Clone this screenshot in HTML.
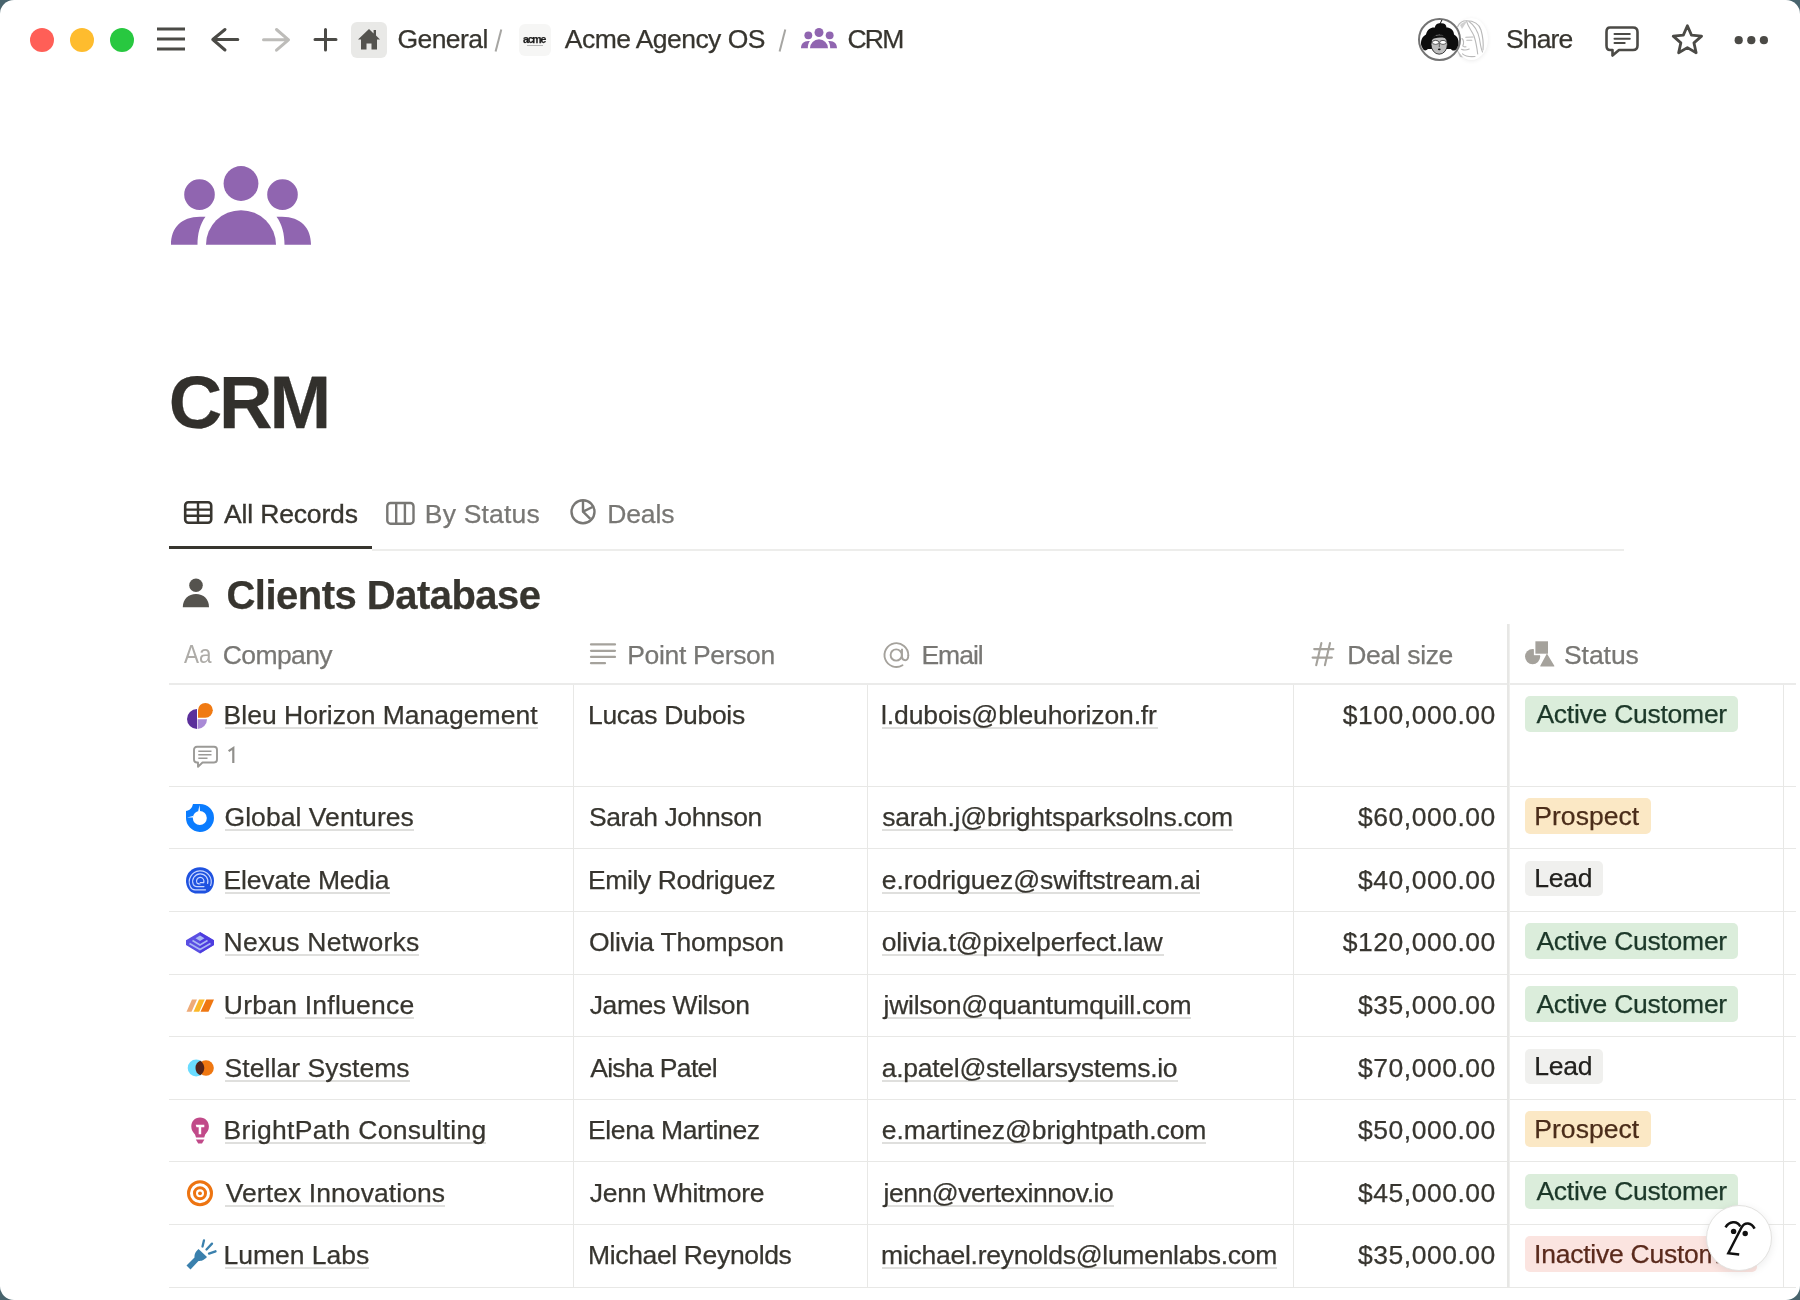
<!DOCTYPE html>
<html><head><meta charset="utf-8"><title>CRM</title>
<style>
html,body{margin:0;padding:0;width:1800px;height:1300px;overflow:hidden;background:#48646d;}
#win{position:absolute;left:0;top:0;width:1800px;height:1300px;background:#fff;border-radius:14px;overflow:hidden;will-change:transform;}
.t{position:absolute;white-space:nowrap;font-family:"Liberation Sans",sans-serif;-webkit-text-stroke:0.25px currentColor;}
svg{overflow:visible}
</style></head><body><div id="win">
<div style="position:absolute;left:30px;top:28px;width:24px;height:24px;border-radius:50%;background:#ff5f57"></div>
<div style="position:absolute;left:70px;top:28px;width:24px;height:24px;border-radius:50%;background:#febc2e"></div>
<div style="position:absolute;left:110px;top:28px;width:24px;height:24px;border-radius:50%;background:#28c840"></div>
<svg style="position:absolute;left:150px;top:20px" width="40" height="40" viewBox="0 0 40 40"><rect x="7" y="7.5" width="28" height="3" fill="#4b4a46"/><rect x="7" y="17.5" width="28" height="3" fill="#4b4a46"/><rect x="7" y="27.5" width="28" height="3" fill="#4b4a46"/></svg>
<svg style="position:absolute;left:205px;top:20px" width="40" height="40" viewBox="0 0 40 40"><path d="M20,9.5 L7.8,19.5 L20,30 M7.8,19.5 H32.8" fill="none" stroke="#4b4a46" stroke-width="3" stroke-linecap="round" stroke-linejoin="round"/></svg>
<svg style="position:absolute;left:255px;top:20px" width="40" height="40" viewBox="0 0 40 40"><path d="M21.5,9.5 L33.5,19.8 L21.5,30.2 M33.5,19.8 H8.5" fill="none" stroke="#bdbcb9" stroke-width="3" stroke-linecap="round" stroke-linejoin="round"/></svg>
<svg style="position:absolute;left:305px;top:20px" width="40" height="40" viewBox="0 0 40 40"><path d="M20.5,9.5 V30 M10,19.5 H31" fill="none" stroke="#4b4a46" stroke-width="3" stroke-linecap="round"/></svg>
<div style="position:absolute;left:351px;top:22px;width:36px;height:36px;border-radius:6px;background:#e9e9e7"></div>
<svg style="position:absolute;left:351px;top:22px" width="36" height="36" viewBox="0 0 36 36"><path d="M18,7 L7,17.5 L10,17.5 L10,27.5 L15.5,27.5 L15.5,21.5 L20.5,21.5 L20.5,27.5 L26,27.5 L26,17.5 L29,17.5 L25,13.6 L25,8 L22.6,8 L22.6,11.4 Z" fill="#54534f"/></svg>
<div class="t " style="left:397.48px;top:24.00px;font-size:26.5px;line-height:30px;letter-spacing:-0.577px;color:#37352f;">General</div>
<svg style="position:absolute;left:490px;top:25px" width="16" height="30" viewBox="0 0 16 30"><path d="M11.3,4.6 L5.6,26.6" stroke="#a6a5a2" stroke-width="2"/></svg>
<div style="position:absolute;left:519px;top:24px;width:32px;height:32px;border-radius:6px;background:#f6f6f5"></div>
<div class="t " style="left:522.98px;top:33.10px;font-size:10.5px;line-height:12px;letter-spacing:-1.166px;color:#1e1e1e;font-weight:700;">acme</div>
<div style="position:absolute;left:527px;top:45px;width:16px;height:1px;background:#b5b5b5"></div>
<div class="t " style="left:564.83px;top:24.00px;font-size:26.5px;line-height:30px;letter-spacing:-0.549px;color:#37352f;">Acme Agency OS</div>
<svg style="position:absolute;left:774px;top:25px" width="16" height="30" viewBox="0 0 16 30"><path d="M11.3,4.6 L5.6,26.6" stroke="#a6a5a2" stroke-width="2"/></svg>
<svg style="position:absolute;left:801px;top:28px" width="37" height="22" viewBox="0 0 37 22"><g transform="scale(0.2571428571428571)" fill="#9065b0"><circle cx="70" cy="17.5" r="17.4"/><circle cx="28.5" cy="28.6" r="15.3"/><circle cx="111.5" cy="28.6" r="15.3"/><path d="M35,78.7 A35,34.5 0 0 1 105,78.7 Z"/><path d="M0,78.7 C0,62 10,50.7 29,50.7 L34.5,50.7 C29,58 26.5,68 26.5,78.7 Z"/><path d="M140,78.7 C140,62 130,50.7 111,50.7 L105.5,50.7 C111,58 113.5,68 113.5,78.7 Z"/></g></svg>
<div class="t " style="left:847.38px;top:24.00px;font-size:26.5px;line-height:30px;letter-spacing:-1.671px;color:#37352f;">CRM</div>
<div style="position:absolute;left:1455px;top:18px;width:33px;height:42px;border-radius:50%;background:#fff;box-shadow:0 1px 4px rgba(0,0,0,0.08)"></div>
<svg style="position:absolute;left:1450px;top:15px" width="45" height="50" viewBox="0 0 45 50"><g fill="none" stroke="#b9b9b9" stroke-width="1.1" stroke-linecap="round"><path d="M7.7,11.5 C10,7 14,5.8 16.5,5.8 C24,5.8 29,9 31,15 C33,22 33.5,30 33,35"/><path d="M16.5,6.2 C18,12 22,16 24,21 C26,27 27,33 27.7,39"/><path d="M19,6.5 C24,10 28,16 29.5,24 C30.5,30 31,34 32.5,37"/><path d="M12,23.5 C13.5,25 14,28 12.8,31 C13.5,32 15,32 16,31.8"/><path d="M15.8,22.3 L23,22 M16.8,25.3 L21.8,25.3"/><path d="M11.5,34.2 Q15,36 19.2,34"/><path d="M12.5,38.8 C15,41 20,42 25,41.5"/></g><path d="M6.5,34 L13,42.5 L10,42 Z" fill="#c4c4c4"/><path d="M10,10 C13,7.5 15,6.5 17,6.3 L12,14 Z" fill="#d0d0d0"/></svg>
<div style="position:absolute;left:1418px;top:18px;width:39px;height:39px;border-radius:50%;background:#fff;border:2px solid #747474"></div>
<svg style="position:absolute;left:1418px;top:18px" width="43" height="43" viewBox="0 0 43 43"><g><path d="M22,6 L24,1.8" stroke="#111" stroke-width="1"/><path d="M4.5,30 C1.5,26 3,19 8,16.5 C9,11.5 13,9 17,9.5 C17,6.5 20,5 23,5.3 C26,5 28.5,6.5 28.5,9.5 C32,9.5 36,12 36,16.5 C41,19 42,26 38.5,31 C37,33 34,33 33,31 L10,31 C8,33 5.5,33 4.5,30 Z" fill="#0d0d0d"/><ellipse cx="21.2" cy="26.2" rx="8.2" ry="10" fill="#bdbdbd" stroke="#111" stroke-width="0.8"/><path d="M12.5,22.5 C14,16 28.5,15.5 30.2,21.5 C26,18.8 17,18.8 12.5,22.5 Z" fill="#111"/><ellipse cx="17.6" cy="24.4" rx="3.3" ry="2" fill="#fff" stroke="#222" stroke-width="0.7"/><ellipse cx="25" cy="24.4" rx="3.3" ry="2" fill="#fff" stroke="#222" stroke-width="0.7"/><path d="M21.3,25 V29.2" stroke="#333" stroke-width="0.7"/><ellipse cx="21.3" cy="31.3" rx="1.4" ry="0.9" fill="#111"/></g></svg>
<div class="t " style="left:1506.01px;top:23.80px;font-size:26.5px;line-height:30px;letter-spacing:-0.843px;color:#37352f;">Share</div>
<svg style="position:absolute;left:1600px;top:20px" width="45" height="42" viewBox="0 0 45 42"><path d="M10,7.5 H33 Q37.5,7.5 37.5,12 V25.5 Q37.5,30 33,30 H19 L12.5,35.5 V30 H10 Q6.5,30 6.5,25.5 V12 Q6.5,7.5 10,7.5 Z" fill="none" stroke="#4b4a46" stroke-width="2.6" stroke-linejoin="round"/><path d="M14.5,14 H29.8 M14.5,18.7 H29.8 M14.5,23 H24.7" stroke="#4b4a46" stroke-width="2" stroke-linecap="round"/></svg>
<svg style="position:absolute;left:1665px;top:18px" width="45" height="42" viewBox="0 0 45 42"><path d="M22.40,7.80 L26.46,17.12 L36.57,18.10 L28.96,24.83 L31.16,34.75 L22.40,29.60 L13.64,34.75 L15.84,24.83 L8.23,18.10 L18.34,17.12 Z" fill="none" stroke="#4b4a46" stroke-width="2.8" stroke-linejoin="round"/></svg>
<svg style="position:absolute;left:1730px;top:30px" width="44" height="20" viewBox="0 0 44 20"><circle cx="8.700000000000045" cy="10.2" r="4.1" fill="#4b4a46"/><circle cx="21.299999999999955" cy="10.2" r="4.1" fill="#4b4a46"/><circle cx="33.90000000000009" cy="10.2" r="4.1" fill="#4b4a46"/></svg>
<svg style="position:absolute;left:171px;top:166px" width="140" height="79" viewBox="0 0 140 79"><g transform="scale(1)" fill="#9065b0"><circle cx="70" cy="17.5" r="17.4"/><circle cx="28.5" cy="28.6" r="15.3"/><circle cx="111.5" cy="28.6" r="15.3"/><path d="M35,78.7 A35,34.5 0 0 1 105,78.7 Z"/><path d="M0,78.7 C0,62 10,50.7 29,50.7 L34.5,50.7 C29,58 26.5,68 26.5,78.7 Z"/><path d="M140,78.7 C140,62 130,50.7 111,50.7 L105.5,50.7 C111,58 113.5,68 113.5,78.7 Z"/></g></svg>
<div class="t " style="left:168.74px;top:361.00px;font-size:74px;line-height:83px;letter-spacing:-3.082px;color:#32302c;font-weight:700;">CRM</div>
<svg style="position:absolute;left:180px;top:495px" width="36" height="34" viewBox="0 0 36 34"><rect x="5.2" y="7.2" width="26" height="20.5" rx="3.2" fill="none" stroke="#37352f" stroke-width="2.6"/><path d="M5.2,14.6 H31.2 M5.2,20.7 H31.2 M18,7.2 V27.7" stroke="#37352f" stroke-width="2.4"/></svg>
<div class="t " style="left:223.93px;top:499.00px;font-size:26.5px;line-height:30px;letter-spacing:-0.149px;color:#37352f;-webkit-text-stroke:0.35px #37352f">All Records</div>
<svg style="position:absolute;left:380px;top:495px" width="40" height="34" viewBox="0 0 40 34"><rect x="7.3" y="8" width="26.2" height="20.7" rx="3.2" fill="none" stroke="#787774" stroke-width="2.4"/><path d="M16.2,8 V28.7 M24.9,8 V28.7" stroke="#787774" stroke-width="2.4"/></svg>
<div class="t " style="left:424.81px;top:499.00px;font-size:26.5px;line-height:30px;letter-spacing:0.199px;color:#787774;-webkit-text-stroke:0.25px #787774">By Status</div>
<svg style="position:absolute;left:565px;top:493px" width="35" height="35" viewBox="0 0 35 35"><circle cx="18" cy="18.7" r="11.5" fill="none" stroke="#787774" stroke-width="2.4"/><path d="M18,7 V18.7 L27.5,14 M18,18.7 L25.3,25.8" fill="none" stroke="#787774" stroke-width="2.4" stroke-linejoin="round"/></svg>
<div class="t " style="left:607.21px;top:499.00px;font-size:26.5px;line-height:30px;letter-spacing:-0.115px;color:#787774;-webkit-text-stroke:0.25px #787774">Deals</div>
<div style="position:absolute;left:372px;top:549px;width:1252px;height:2px;background:#ededeb"></div>
<div style="position:absolute;left:169px;top:546px;width:203px;height:3px;background:#37352f"></div>
<svg style="position:absolute;left:180px;top:575px" width="32" height="36" viewBox="0 0 32 36"><circle cx="16" cy="10.3" r="6.8" fill="#55534e"/><path d="M2.8,32.2 C2.8,24 8.5,19 16,19 C23.5,19 29,24 29,32.2 Z" fill="#55534e"/></svg>
<div class="t " style="left:226.50px;top:572.50px;font-size:40px;line-height:44px;letter-spacing:-0.520px;color:#37352f;font-weight:700;">Clients Database</div>
<div class="t " style="left:183.94px;top:639.90px;font-size:25px;line-height:28px;letter-spacing:0.000px;color:#aeaca8;-webkit-text-stroke:0;transform:scaleX(0.9);transform-origin:0 0">Aa</div>
<div class="t " style="left:222.78px;top:639.60px;font-size:26.5px;line-height:30px;letter-spacing:-0.605px;color:#787774;">Company</div>
<svg style="position:absolute;left:585px;top:638px" width="36" height="32" viewBox="0 0 36 32"><path d="M6,6.399999999999977 H30" stroke="#a5a29c" stroke-width="2.2" stroke-linecap="round"/><path d="M6,12.799999999999955 H30" stroke="#a5a29c" stroke-width="2.2" stroke-linecap="round"/><path d="M6,18.899999999999977 H30" stroke="#a5a29c" stroke-width="2.2" stroke-linecap="round"/><path d="M6,25.200000000000045 H20" stroke="#a5a29c" stroke-width="2.2" stroke-linecap="round"/></svg>
<div class="t " style="left:627.31px;top:639.60px;font-size:26.5px;line-height:30px;letter-spacing:-0.352px;color:#787774;">Point Person</div>
<svg style="position:absolute;left:880px;top:638px" width="34" height="34" viewBox="0 0 34 34"><path d="M28.3,17 A11.9,11.9 0 1 0 22.5,27.3" fill="none" stroke="#a5a29c" stroke-width="1.9" stroke-linecap="round"/><circle cx="16.2" cy="17" r="5.6" fill="none" stroke="#a5a29c" stroke-width="1.9"/><path d="M22,10.8 V18.8 Q22,22.2 25.2,22.2 Q28.3,22.2 28.3,17" fill="none" stroke="#a5a29c" stroke-width="1.9"/></svg>
<div class="t " style="left:921.41px;top:639.60px;font-size:26.5px;line-height:30px;letter-spacing:-0.994px;color:#787774;">Email</div>
<svg style="position:absolute;left:1308px;top:638px" width="30" height="32" viewBox="0 0 30 32"><path d="M13.4,5 L8.2,27.3 M22,5 L16.9,27.3 M6.2,11.1 H25.4 M4.6,19.6 H23.9" stroke="#a5a29c" stroke-width="2.1" stroke-linecap="round"/></svg>
<div class="t " style="left:1347.31px;top:639.60px;font-size:26.5px;line-height:30px;letter-spacing:-0.371px;color:#787774;">Deal size</div>
<svg style="position:absolute;left:1520px;top:636px" width="40" height="34" viewBox="0 0 40 34"><circle cx="12.6" cy="20.6" r="7.6" fill="#a5a29c"/><rect x="13.9" y="3.8" width="15.6" height="15.4" fill="#fff"/><path d="M26.9,17.3 L19.9,30.2 L34.7,30.2 Z" fill="#fff" stroke="#fff" stroke-width="3.2" stroke-linejoin="round"/><rect x="15.4" y="5.3" width="12.6" height="12.4" fill="#a5a29c"/><path d="M26.9,17.6 L20.3,29.8 Q19.9,30.4 20.6,30.4 L34,30.4 Q34.7,30.4 34.3,29.8 Z" fill="#a5a29c"/></svg>
<div class="t " style="left:1564.01px;top:639.60px;font-size:26.5px;line-height:30px;letter-spacing:-0.061px;color:#787774;">Status</div>
<div style="position:absolute;left:169px;top:683px;width:1627px;height:2px;background:#ebebea"></div>
<div style="position:absolute;left:169px;top:786px;width:1627px;height:1px;background:#e8e8e6"></div>
<div style="position:absolute;left:169px;top:848px;width:1627px;height:1px;background:#e8e8e6"></div>
<div style="position:absolute;left:169px;top:911px;width:1627px;height:1px;background:#e8e8e6"></div>
<div style="position:absolute;left:169px;top:974px;width:1627px;height:1px;background:#e8e8e6"></div>
<div style="position:absolute;left:169px;top:1036px;width:1627px;height:1px;background:#e8e8e6"></div>
<div style="position:absolute;left:169px;top:1099px;width:1627px;height:1px;background:#e8e8e6"></div>
<div style="position:absolute;left:169px;top:1161px;width:1627px;height:1px;background:#e8e8e6"></div>
<div style="position:absolute;left:169px;top:1224px;width:1627px;height:1px;background:#e8e8e6"></div>
<div style="position:absolute;left:169px;top:1287px;width:1627px;height:1px;background:#e8e8e6"></div>
<div style="position:absolute;left:573px;top:685px;width:1px;height:602px;background:#e8e8e6"></div>
<div style="position:absolute;left:867px;top:685px;width:1px;height:602px;background:#e8e8e6"></div>
<div style="position:absolute;left:1293px;top:685px;width:1px;height:602px;background:#e8e8e6"></div>
<div style="position:absolute;left:1783px;top:685px;width:1px;height:602px;background:#e8e8e6"></div>
<div style="position:absolute;left:1507px;top:624px;width:2px;height:663px;background:#e7e7e5"></div>
<div style="position:absolute;left:1509px;top:624px;width:1px;height:663px;background:#efefed"></div>
<div style="position:absolute;left:225px;top:727px;width:313.29999999999995px;height:2px;background:#dfdfdd"></div>
<div class="t " style="left:223.61px;top:700.00px;font-size:26.5px;line-height:30px;letter-spacing:0.006px;color:#37352f;">Bleu Horizon Management</div>
<div class="t " style="left:588.01px;top:700.00px;font-size:26.5px;line-height:30px;letter-spacing:-0.307px;color:#37352f;">Lucas Dubois</div>
<div style="position:absolute;left:882px;top:727px;width:276.0px;height:2px;background:#dfdfdd"></div>
<div class="t " style="left:881.11px;top:700.00px;font-size:26.5px;line-height:30px;letter-spacing:-0.136px;color:#37352f;">l.dubois@bleuhorizon.fr</div>
<div class="t " style="left:1342.81px;top:700.00px;font-size:26.5px;line-height:30px;letter-spacing:0.514px;color:#37352f;">$100,000.00</div>
<div style="position:absolute;left:1525px;top:696px;width:212.5px;height:35.5px;border-radius:5px;background:#dbeddb"></div>
<div class="t " style="left:1536.43px;top:698.80px;font-size:26.5px;line-height:30px;letter-spacing:-0.258px;color:#1c3829;">Active Customer</div>
<div style="position:absolute;left:225px;top:829px;width:188.89999999999998px;height:2px;background:#dfdfdd"></div>
<div class="t " style="left:224.48px;top:802.00px;font-size:26.5px;line-height:30px;letter-spacing:0.057px;color:#37352f;">Global Ventures</div>
<div class="t " style="left:589.01px;top:802.00px;font-size:26.5px;line-height:30px;letter-spacing:-0.422px;color:#37352f;">Sarah Johnson</div>
<div style="position:absolute;left:882px;top:829px;width:351.0px;height:2px;background:#dfdfdd"></div>
<div class="t " style="left:882.17px;top:802.00px;font-size:26.5px;line-height:30px;letter-spacing:-0.214px;color:#37352f;">sarah.j@brightsparksolns.com</div>
<div class="t " style="left:1358.03px;top:802.00px;font-size:26.5px;line-height:30px;letter-spacing:0.514px;color:#37352f;">$60,000.00</div>
<div style="position:absolute;left:1525px;top:798px;width:125.8px;height:35.5px;border-radius:5px;background:#fbe8c5"></div>
<div class="t " style="left:1534.31px;top:800.80px;font-size:26.5px;line-height:30px;letter-spacing:0.035px;color:#4b2d1a;">Prospect</div>
<div style="position:absolute;left:225px;top:891.5px;width:165.39999999999998px;height:2px;background:#dfdfdd"></div>
<div class="t " style="left:223.61px;top:864.50px;font-size:26.5px;line-height:30px;letter-spacing:-0.180px;color:#37352f;">Elevate Media</div>
<div class="t " style="left:588.01px;top:864.50px;font-size:26.5px;line-height:30px;letter-spacing:-0.379px;color:#37352f;">Emily Rodriguez</div>
<div style="position:absolute;left:882px;top:891.5px;width:318.29999999999995px;height:2px;background:#dfdfdd"></div>
<div class="t " style="left:881.77px;top:864.50px;font-size:26.5px;line-height:30px;letter-spacing:-0.105px;color:#37352f;">e.rodriguez@swiftstream.ai</div>
<div class="t " style="left:1358.03px;top:864.50px;font-size:26.5px;line-height:30px;letter-spacing:0.514px;color:#37352f;">$40,000.00</div>
<div style="position:absolute;left:1525px;top:860.5px;width:77.6px;height:35.5px;border-radius:5px;background:#f0f0ee"></div>
<div class="t " style="left:1534.31px;top:863.30px;font-size:26.5px;line-height:30px;letter-spacing:-0.285px;color:#22211e;">Lead</div>
<div style="position:absolute;left:225px;top:954px;width:194.3px;height:2px;background:#dfdfdd"></div>
<div class="t " style="left:223.61px;top:927.00px;font-size:26.5px;line-height:30px;letter-spacing:0.207px;color:#37352f;">Nexus Networks</div>
<div class="t " style="left:588.94px;top:927.00px;font-size:26.5px;line-height:30px;letter-spacing:-0.231px;color:#37352f;">Olivia Thompson</div>
<div style="position:absolute;left:882px;top:954px;width:282.29999999999995px;height:2px;background:#dfdfdd"></div>
<div class="t " style="left:881.77px;top:927.00px;font-size:26.5px;line-height:30px;letter-spacing:-0.155px;color:#37352f;">olivia.t@pixelperfect.law</div>
<div class="t " style="left:1342.81px;top:927.00px;font-size:26.5px;line-height:30px;letter-spacing:0.514px;color:#37352f;">$120,000.00</div>
<div style="position:absolute;left:1525px;top:923px;width:212.5px;height:35.5px;border-radius:5px;background:#dbeddb"></div>
<div class="t " style="left:1536.43px;top:925.80px;font-size:26.5px;line-height:30px;letter-spacing:-0.258px;color:#1c3829;">Active Customer</div>
<div style="position:absolute;left:225px;top:1017px;width:189.10000000000002px;height:2px;background:#dfdfdd"></div>
<div class="t " style="left:223.75px;top:990.00px;font-size:26.5px;line-height:30px;letter-spacing:0.242px;color:#37352f;">Urban Influence</div>
<div class="t " style="left:589.80px;top:990.00px;font-size:26.5px;line-height:30px;letter-spacing:-0.440px;color:#37352f;">James Wilson</div>
<div style="position:absolute;left:882px;top:1017px;width:309.4000000000001px;height:2px;background:#dfdfdd"></div>
<div class="t " style="left:883.56px;top:990.00px;font-size:26.5px;line-height:30px;letter-spacing:-0.262px;color:#37352f;">jwilson@quantumquill.com</div>
<div class="t " style="left:1358.03px;top:990.00px;font-size:26.5px;line-height:30px;letter-spacing:0.514px;color:#37352f;">$35,000.00</div>
<div style="position:absolute;left:1525px;top:986px;width:212.5px;height:35.5px;border-radius:5px;background:#dbeddb"></div>
<div class="t " style="left:1536.43px;top:988.80px;font-size:26.5px;line-height:30px;letter-spacing:-0.258px;color:#1c3829;">Active Customer</div>
<div style="position:absolute;left:225px;top:1079.5px;width:184.7px;height:2px;background:#dfdfdd"></div>
<div class="t " style="left:224.61px;top:1052.50px;font-size:26.5px;line-height:30px;letter-spacing:0.065px;color:#37352f;">Stellar Systems</div>
<div class="t " style="left:590.13px;top:1052.50px;font-size:26.5px;line-height:30px;letter-spacing:-0.664px;color:#37352f;">Aisha Patel</div>
<div style="position:absolute;left:882px;top:1079.5px;width:296.0px;height:2px;background:#dfdfdd"></div>
<div class="t " style="left:881.77px;top:1052.50px;font-size:26.5px;line-height:30px;letter-spacing:-0.271px;color:#37352f;">a.patel@stellarsystems.io</div>
<div class="t " style="left:1358.03px;top:1052.50px;font-size:26.5px;line-height:30px;letter-spacing:0.514px;color:#37352f;">$70,000.00</div>
<div style="position:absolute;left:1525px;top:1048.5px;width:77.6px;height:35.5px;border-radius:5px;background:#f0f0ee"></div>
<div class="t " style="left:1534.31px;top:1051.30px;font-size:26.5px;line-height:30px;letter-spacing:-0.285px;color:#22211e;">Lead</div>
<div style="position:absolute;left:225px;top:1142px;width:260.6px;height:2px;background:#dfdfdd"></div>
<div class="t " style="left:223.61px;top:1115.00px;font-size:26.5px;line-height:30px;letter-spacing:0.316px;color:#37352f;">BrightPath Consulting</div>
<div class="t " style="left:588.01px;top:1115.00px;font-size:26.5px;line-height:30px;letter-spacing:-0.357px;color:#37352f;">Elena Martinez</div>
<div style="position:absolute;left:882px;top:1142px;width:324.20000000000005px;height:2px;background:#dfdfdd"></div>
<div class="t " style="left:881.77px;top:1115.00px;font-size:26.5px;line-height:30px;letter-spacing:-0.051px;color:#37352f;">e.martinez@brightpath.com</div>
<div class="t " style="left:1358.03px;top:1115.00px;font-size:26.5px;line-height:30px;letter-spacing:0.514px;color:#37352f;">$50,000.00</div>
<div style="position:absolute;left:1525px;top:1111px;width:125.8px;height:35.5px;border-radius:5px;background:#fbe8c5"></div>
<div class="t " style="left:1534.31px;top:1113.80px;font-size:26.5px;line-height:30px;letter-spacing:0.035px;color:#4b2d1a;">Prospect</div>
<div style="position:absolute;left:225px;top:1204.5px;width:220.2px;height:2px;background:#dfdfdd"></div>
<div class="t " style="left:225.67px;top:1177.50px;font-size:26.5px;line-height:30px;letter-spacing:0.084px;color:#37352f;">Vertex Innovations</div>
<div class="t " style="left:589.80px;top:1177.50px;font-size:26.5px;line-height:30px;letter-spacing:-0.285px;color:#37352f;">Jenn Whitmore</div>
<div style="position:absolute;left:882px;top:1204.5px;width:232.0999999999999px;height:2px;background:#dfdfdd"></div>
<div class="t " style="left:883.56px;top:1177.50px;font-size:26.5px;line-height:30px;letter-spacing:-0.467px;color:#37352f;">jenn@vertexinnov.io</div>
<div class="t " style="left:1358.03px;top:1177.50px;font-size:26.5px;line-height:30px;letter-spacing:0.514px;color:#37352f;">$45,000.00</div>
<div style="position:absolute;left:1525px;top:1173.5px;width:212.5px;height:35.5px;border-radius:5px;background:#dbeddb"></div>
<div class="t " style="left:1536.43px;top:1176.30px;font-size:26.5px;line-height:30px;letter-spacing:-0.258px;color:#1c3829;">Active Customer</div>
<div style="position:absolute;left:225px;top:1267px;width:144.3px;height:2px;background:#dfdfdd"></div>
<div class="t " style="left:223.61px;top:1240.00px;font-size:26.5px;line-height:30px;letter-spacing:-0.030px;color:#37352f;">Lumen Labs</div>
<div class="t " style="left:588.01px;top:1240.00px;font-size:26.5px;line-height:30px;letter-spacing:-0.356px;color:#37352f;">Michael Reynolds</div>
<div style="position:absolute;left:882px;top:1267px;width:395.0px;height:2px;background:#dfdfdd"></div>
<div class="t " style="left:881.11px;top:1240.00px;font-size:26.5px;line-height:30px;letter-spacing:-0.269px;color:#37352f;">michael.reynolds@lumenlabs.com</div>
<div class="t " style="left:1358.03px;top:1240.00px;font-size:26.5px;line-height:30px;letter-spacing:0.514px;color:#37352f;">$35,000.00</div>
<div style="position:absolute;left:1525px;top:1236px;width:231.7px;height:35.5px;border-radius:5px;background:#fbe4e0"></div>
<div class="t " style="left:1534.05px;top:1238.80px;font-size:26.5px;line-height:30px;letter-spacing:-0.245px;color:#5a2a1c;">Inactive Customer</div>
<svg style="position:absolute;left:190px;top:742px" width="30" height="30" viewBox="0 0 30 30"><path d="M7,4.8 H24 Q27,4.8 27,7.8 V17.5 Q27,20.5 24,20.5 H12.5 L8,24.8 V20.5 H7 Q4,20.5 4,17.5 V7.8 Q4,4.8 7,4.8 Z" fill="none" stroke="#9b9a97" stroke-width="1.9" stroke-linejoin="round"/><path d="M8.3,9.3 H21.5 M8.3,12.7 H21.5 M8.3,16.3 H17.5" stroke="#9b9a97" stroke-width="1.5"/></svg>
<svg style="position:absolute;left:220px;top:740px" width="20" height="30" viewBox="0 0 20 30"><path d="M8.6,11.2 L13.3,8 V23" fill="none" stroke="#91908c" stroke-width="2.2" stroke-linejoin="miter"/></svg>
<svg style="position:absolute;left:183px;top:700px" width="32" height="32" viewBox="0 0 32 32"><path d="M14,9 A10,10 0 0 0 14,29 Z" fill="#5b2f9b"/><path d="M14.6,19.3 H24 A9.6,9.6 0 0 1 14.6,29 Z" fill="#a98ad6"/><path d="M15,17.7 V10.3 A7.4,7.4 0 0 1 22.4,2.9 A7.4,7.4 0 0 1 29.8,10.3 A7.4,7.4 0 0 1 22.4,17.7 Z" fill="#f07a13"/></svg>
<svg style="position:absolute;left:183px;top:800px" width="34" height="34" viewBox="0 0 34 34"><path d="M17,3.9 A14,14 0 1 1 3,17.5 L3,11 Q7,10.5 9,7 L10,4 Z" fill="#0a7cff"/><circle cx="16.8" cy="18" r="7" fill="#fff"/><path d="M16.5,5 L17,11 L15,12 Z M4,17.5 L10,17.5 L10,16 Z" fill="#fff"/></svg>
<svg style="position:absolute;left:183px;top:863px" width="34" height="34" viewBox="0 0 34 34"><path d="M17,4.2 C25,4.2 31,10 31,17.8 C31,24 27.5,29.5 22,30.5 L12,30.5 C6.5,29.5 3,24 3,17.8 C3,10 9,4.2 17,4.2 Z" fill="#1f52e0"/><g fill="none" stroke="#c9d6ff" stroke-width="1.15" stroke-linecap="round"><path d="M27.6,22.5 A11,11 0 1 0 7.4,23.8 Q8.6,26.8 12,26.8 H22.5"/><path d="M24.6,20.5 A7.6,7.6 0 1 0 10.2,21.2 Q11.2,23.6 14,23.6 H21"/><path d="M20.6,19.6 A3.7,3.7 0 1 0 14,20 Q15,21 17,21"/><path d="M17.2,19.6 H20.8"/></g></svg>
<svg style="position:absolute;left:183px;top:925px" width="34" height="34" viewBox="0 0 34 34"><path d="M17,7 L31,15.2 V20 L17,28.5 L3,20 V15.2 Z" fill="#5a4fe3"/><path d="M17,7 L31,15.2 V20 L17,28.5 Z" fill="#4a38df" opacity="0.8"/><path d="M17,10.5 L21.5,13.3 L17,16 L12.5,13.3 Z" fill="#a9b8f3"/><path d="M9.5,15.5 L17,20 L24.5,15.5" fill="none" stroke="#a9b8f3" stroke-width="1.6"/><path d="M6.5,18.5 L17,24.5 L27.5,18.5" fill="none" stroke="#a9b8f3" stroke-width="1.6"/></svg>
<svg style="position:absolute;left:183px;top:988px" width="34" height="34" viewBox="0 0 34 34"><path d="M9,11.6 L14,11.6 L8.5,23.8 L3.5,23.8 Z" fill="#eeaa77"/><path d="M16,11.6 L21.7,11.6 L16.2,23.8 L10.5,23.8 Z" fill="#fbb829"/><path d="M23.3,11.6 L31,11.6 L25.5,23.8 L17.5,23.8 Z" fill="#ef7712"/></svg>
<svg style="position:absolute;left:183px;top:1050px" width="34" height="34" viewBox="0 0 34 34"><circle cx="13.2" cy="18" r="8.5" fill="#6adcff"/><circle cx="23" cy="18" r="7.8" fill="#ef7711"/><path d="M17.3,10.8 A8.5,8.5 0 0 1 17.3,25.2 A7.8,7.8 0 0 1 17.3,10.8 Z" fill="#52231a"/></svg>
<svg style="position:absolute;left:183px;top:1113px" width="34" height="34" viewBox="0 0 34 34"><path d="M17,4.5 C11.5,4.5 8.3,8.5 8.3,13.5 C8.3,17 10,19.2 12,21.5 L13,24.5 H21.2 L22.2,21.5 C24.2,19.2 25.9,17 25.9,13.5 C25.9,8.5 22.5,4.5 17,4.5 Z" fill="#c14a89"/><path d="M12.8,26.5 H21.4 L19,30.5 H15.2 Z" fill="#c14a89"/><path d="M12.7,11.7 H21.3 V14.3 H18.2 V21.3 H15.7 V14.3 H13.5 Z" fill="#fff"/></svg>
<svg style="position:absolute;left:183px;top:1176px" width="34" height="34" viewBox="0 0 34 34"><circle cx="17" cy="17.3" r="11.5" fill="none" stroke="#ed7411" stroke-width="3"/><circle cx="17" cy="17.3" r="5.5" fill="none" stroke="#ed7411" stroke-width="3"/><circle cx="17" cy="17.3" r="1.9" fill="#ed7411"/></svg>
<svg style="position:absolute;left:181px;top:1237px" width="40" height="40" viewBox="0 0 40 40"><path d="M5.5,28.5 L13.5,20.5 C13.5,17 14,15.5 17.5,12 L26,20 C22.5,23.5 21,24 17.5,24 L9.5,32.5 Z" fill="#3a80ad"/><path d="M21.5,9.5 L23,3.3 M25.5,12.5 L31,6.6 M28,16.6 L34.5,14.3" stroke="#3a80ad" stroke-width="2.3" stroke-linecap="round"/></svg>
<div style="position:absolute;left:1705.5px;top:1205px;width:64px;height:64px;border-radius:50%;background:#fff;border:1px solid #e3e2e0;box-shadow:0 2px 8px rgba(0,0,0,0.08)"></div>
<svg style="position:absolute;left:1706px;top:1205px" width="66" height="66" viewBox="0 0 66 66"><g fill="none" stroke="#111" stroke-width="2.5" stroke-linecap="butt" stroke-linejoin="miter"><path d="M19.5,22.3 C23,16.5 31,15 34.3,21.5"/><path d="M48.6,23.6 C45.5,17.3 38.5,16.5 35.5,22.5 L22.3,48.3 L33.2,49.6"/></g><circle cx="27.6" cy="26.4" r="2.7" fill="#111"/><circle cx="39.2" cy="28.5" r="2.7" fill="#111"/></svg>
</div></body></html>
